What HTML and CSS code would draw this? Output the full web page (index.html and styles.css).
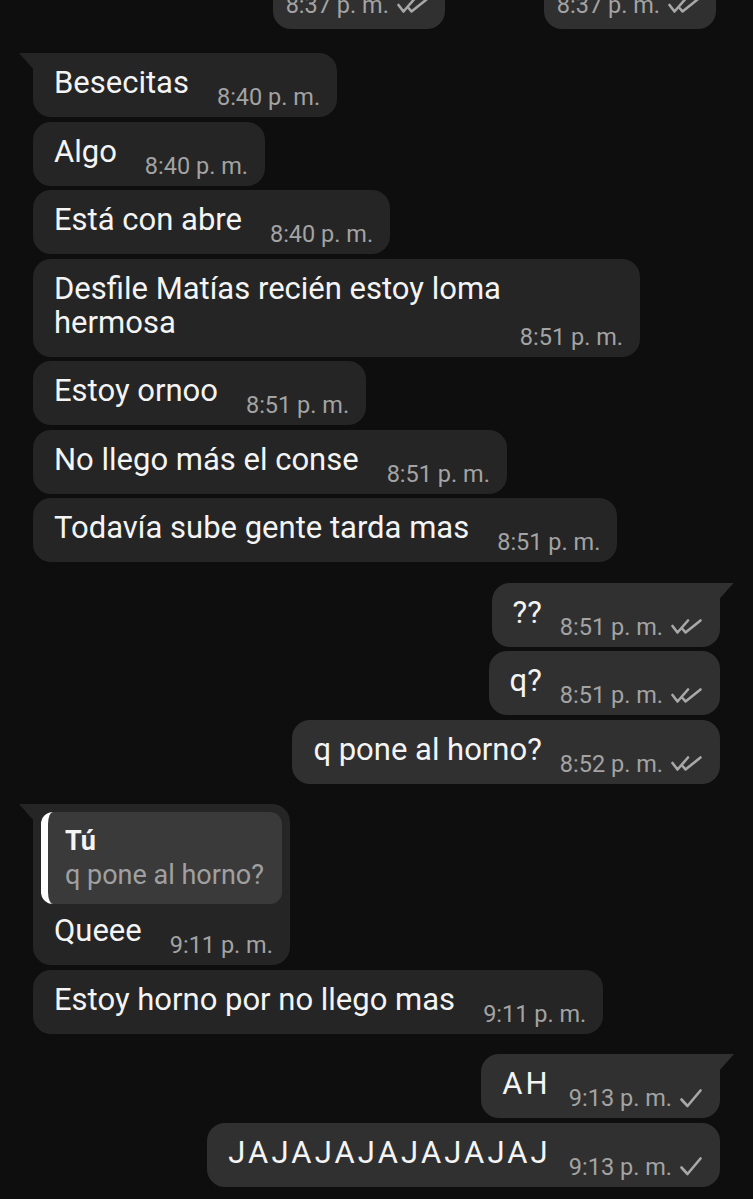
FILE: index.html
```html
<!DOCTYPE html>
<html lang="es">
<head>
    <meta charset="UTF-8">
    <meta name="viewport" content="width=device-width, initial-scale=1.0">
    <title>Chat</title>
    <link rel="stylesheet" href="styles.css">
</head>
<body>
    <div class="chat">
        <!-- mensajes anteriores, cortados arriba -->
        <div class="row row--out row--cut">
            <div class="bubble bubble--out bubble--cut">
                <div class="line">
                    <span class="meta"><span class="time">8:37 p. m.</span>
                        <svg class="ticks" viewBox="0 0 31 15"><path d="M1.5 7 L6.5 13.5 L17 1.5 M12 10.5 L14.5 13.5 L29.5 1.5"/></svg>
                    </span>
                </div>
            </div>
            <div class="bubble bubble--out bubble--cut">
                <div class="line">
                    <span class="meta"><span class="time">8:37 p. m.</span>
                        <svg class="ticks" viewBox="0 0 31 15"><path d="M1.5 7 L6.5 13.5 L17 1.5 M12 10.5 L14.5 13.5 L29.5 1.5"/></svg>
                    </span>
                </div>
            </div>
        </div>

        <div class="row row--in row--first">
            <div class="bubble bubble--in bubble--tail">
                <div class="line"><span class="text">Besecitas</span><span class="meta"><span class="time">8:40 p. m.</span></span></div>
            </div>
        </div>
        <div class="row row--in">
            <div class="bubble bubble--in">
                <div class="line"><span class="text">Algo</span><span class="meta"><span class="time">8:40 p. m.</span></span></div>
            </div>
        </div>
        <div class="row row--in">
            <div class="bubble bubble--in">
                <div class="line"><span class="text">Está con abre</span><span class="meta"><span class="time">8:40 p. m.</span></span></div>
            </div>
        </div>
        <div class="row row--in">
            <div class="bubble bubble--in bubble--wide">
                <div class="line"><span class="text">Desfile Matías recién estoy loma hermosa</span><span class="meta"><span class="time">8:51 p. m.</span></span></div>
            </div>
        </div>
        <div class="row row--in">
            <div class="bubble bubble--in">
                <div class="line"><span class="text">Estoy ornoo</span><span class="meta"><span class="time">8:51 p. m.</span></span></div>
            </div>
        </div>
        <div class="row row--in">
            <div class="bubble bubble--in">
                <div class="line"><span class="text">No llego más el conse</span><span class="meta"><span class="time">8:51 p. m.</span></span></div>
            </div>
        </div>
        <div class="row row--in">
            <div class="bubble bubble--in">
                <div class="line"><span class="text">Todavía sube gente tarda mas</span><span class="meta"><span class="time">8:51 p. m.</span></span></div>
            </div>
        </div>

        <div class="row row--out row--first">
            <div class="bubble bubble--out bubble--tail">
                <div class="line"><span class="text">??</span>
                    <span class="meta"><span class="time">8:51 p. m.</span>
                        <svg class="ticks" viewBox="0 0 31 15"><path d="M1.5 7 L6.5 13.5 L17 1.5 M12 10.5 L14.5 13.5 L29.5 1.5"/></svg>
                    </span>
                </div>
            </div>
        </div>
        <div class="row row--out">
            <div class="bubble bubble--out">
                <div class="line"><span class="text">q?</span>
                    <span class="meta"><span class="time">8:51 p. m.</span>
                        <svg class="ticks" viewBox="0 0 31 15"><path d="M1.5 7 L6.5 13.5 L17 1.5 M12 10.5 L14.5 13.5 L29.5 1.5"/></svg>
                    </span>
                </div>
            </div>
        </div>
        <div class="row row--out">
            <div class="bubble bubble--out">
                <div class="line"><span class="text">q pone al horno?</span>
                    <span class="meta"><span class="time">8:52 p. m.</span>
                        <svg class="ticks" viewBox="0 0 31 15"><path d="M1.5 7 L6.5 13.5 L17 1.5 M12 10.5 L14.5 13.5 L29.5 1.5"/></svg>
                    </span>
                </div>
            </div>
        </div>

        <div class="row row--in row--first">
            <div class="bubble bubble--in bubble--tail">
                <div class="quote">
                    <div class="quote-name">Tú</div>
                    <div class="quote-text">q pone al horno?</div>
                </div>
                <div class="line line--reply"><span class="text">Queee</span><span class="meta"><span class="time">9:11 p. m.</span></span></div>
            </div>
        </div>
        <div class="row row--in">
            <div class="bubble bubble--in">
                <div class="line"><span class="text">Estoy horno por no llego mas</span><span class="meta"><span class="time">9:11 p. m.</span></span></div>
            </div>
        </div>

        <div class="row row--out row--first">
            <div class="bubble bubble--out bubble--tail">
                <div class="line"><span class="text text--caps">AH</span>
                    <span class="meta"><span class="time">9:13 p. m.</span>
                        <svg class="tick" viewBox="0 0 22 19"><path d="M1.5 10.5 L7.5 17 L20.5 1.5"/></svg>
                    </span>
                </div>
            </div>
        </div>
        <div class="row row--out">
            <div class="bubble bubble--out">
                <div class="line"><span class="text text--caps">JAJAJAJAJAJAJAJ</span>
                    <span class="meta"><span class="time">9:13 p. m.</span>
                        <svg class="tick" viewBox="0 0 22 19"><path d="M1.5 10.5 L7.5 17 L20.5 1.5"/></svg>
                    </span>
                </div>
            </div>
        </div>
    </div>
</body>
</html>
```

FILE: styles.css
```css
body {
    margin: 0;
    background: #0e0e0e;
    font-family: Roboto, "Noto Sans", sans-serif;
    color: #f4f4f4;
}
.chat {
    display: flex;
    flex-direction: column;
    gap: 4.5px;
    padding: 0 33px;
}
.row {
    display: flex;
}
.row--out {
    justify-content: flex-end;
}
.row--first {
    margin-top: 16px;
}
.row--cut {
    height: 29px;
    gap: 99px;
    padding-right: 4px;
    align-items: flex-end;
}
.row--cut + .row--first {
    margin-top: 19.5px;
}
.bubble {
    position: relative;
    max-width: 607px;
    box-sizing: border-box;
    border-radius: 18px;
    background: #252525;
}
.bubble--out {
    background: #303030;
}
.bubble--wide {
    width: 607px;
}
.line {
    display: flex;
    align-items: flex-end;
    padding: 13px 17px 8px 21px;
}
.bubble--out .line {
    padding-right: 18px;
}
.text {
    font-size: 31px;
    line-height: 34px;
    margin-bottom: 9px;
}
.text--caps {
    letter-spacing: 3.1px;
}
.meta {
    display: flex;
    align-items: center;
    gap: 8px;
    margin-left: 28px;
    flex-shrink: 0;
    white-space: nowrap;
    color: #a3a3a3;
}
.bubble--out .meta {
    margin-left: 18px;
}
.bubble--wide .meta {
    margin-left: auto;
}
.time {
    font-size: 23.5px;
    line-height: 24px;
}
.ticks {
    width: 31px;
    height: 15px;
}
.tick {
    width: 22px;
    height: 19px;
}
.ticks path, .tick path {
    fill: none;
    stroke: #a8a8a8;
    stroke-width: 2.6;
    stroke-linecap: round;
    stroke-linejoin: round;
}

/* colita del primer mensaje del grupo */
.bubble--in.bubble--tail {
    border-top-left-radius: 0;
}
.bubble--out.bubble--tail {
    border-top-right-radius: 0;
}
.bubble--tail::before {
    content: "";
    position: absolute;
    top: 0;
    width: 15px;
    height: 17px;
    background: inherit;
}
.bubble--in.bubble--tail::before {
    left: -14px;
    clip-path: polygon(0 0, 100% 0, 100% 100%);
}
.bubble--out.bubble--tail::before {
    right: -14px;
    clip-path: polygon(0 0, 100% 0, 0 100%);
}

/* burbujas cortadas arriba */
.bubble--cut {
    height: 29px;
    border-top-left-radius: 0;
    border-top-right-radius: 0;
    display: flex;
    align-items: flex-end;
}
.bubble--cut .line {
    padding: 0 17px 12px 13px;
}
.bubble--cut .meta {
    margin-left: 0;
}

/* respuesta citada */
.quote {
    margin: 8px 8px 0;
    padding: 12px 17px;
    background: #3a3a3a;
    border-left: 7px solid #ffffff;
    border-radius: 12px;
    font-size: 27px;
    line-height: 34px;
}
.quote-name {
    font-weight: bold;
}
.quote-text {
    color: #a0a0a0;
}
.line--reply {
    padding-top: 10px;
}
```
